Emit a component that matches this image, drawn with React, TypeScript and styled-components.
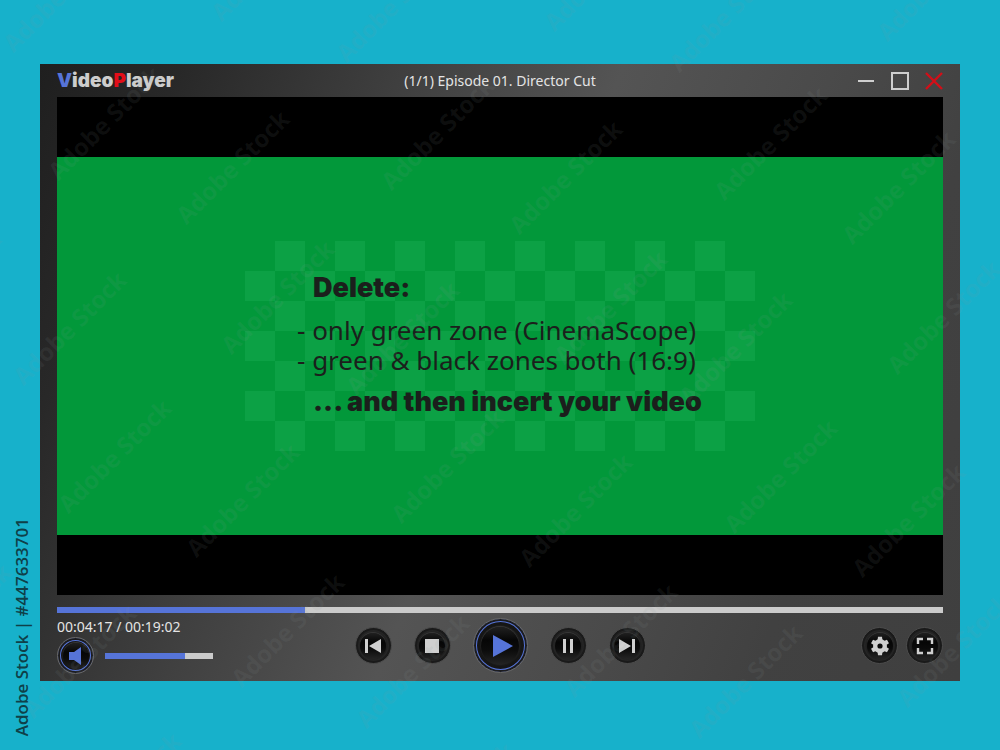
import React, { useState } from 'react';
import styled, { createGlobalStyle, css } from 'styled-components';

const blue = '#5674d8';
const light = '#cfcfcf';
const body = `'Noto Sans', 'Open Sans', sans-serif`;
const display = `Inter, 'Liberation Sans', sans-serif`;
const stamp = `'Open Sans', 'Noto Sans', sans-serif`;

const GlobalStyle = createGlobalStyle`
  *, *::before, *::after { box-sizing: border-box; }
  body { margin: 0; background: #17b1cb; font-family: ${body}; }
`;

const Page = styled.div`
  position: relative;
  min-height: 100vh;
  padding: 64px 4% 68px;
  overflow: hidden;
`;

const PlayerWindow = styled.main`
  padding: 0 17px;
  background: linear-gradient(112deg, #1f1f1f 0%, #282828 12%, #404040 32%, #545454 50%, #4a4a4a 68%, #414141 82%, #3f3f3f 100%);
`;

const TitleBar = styled.header`
  display: grid;
  grid-template-columns: 1fr auto 1fr;
  align-items: center;
  height: 33px;
`;

const Logo = styled.h1`
  margin: 0;
  font: 900 19px/24px ${display};
  color: #cdcdcd;
`;

const LogoLetter = styled.span<{ $color: string }>`
  color: ${(p) => p.$color};
`;

const EpisodeTitle = styled.p`
  margin: 0;
  font-size: 14px;
  line-height: 20px;
  color: #e4e4e4;
`;

const WindowButtons = styled.div`
  display: flex;
  justify-content: flex-end;
  gap: 16px;
`;

const WindowButton = styled.button`
  display: flex;
  width: 18px;
  height: 18px;
  padding: 0;
  border: 0;
  background: none;
  cursor: pointer;
`;

const Screen = styled.section`
  display: flex;
  aspect-ratio: 16 / 9;
  padding: 60px 0;
  background: #000;
`;

const Scope = styled.div`
  flex: 1;
  display: flex;
  align-items: center;
  justify-content: center;
  background: #02983a;
`;

const Checker = styled.div`
  display: flex;
  align-items: center;
  justify-content: center;
  width: 510px;
  height: 210px;
  padding-bottom: 3px;
  background: repeating-conic-gradient(#0ca145 0 25%, transparent 0 50%) 0 0 / 60px 60px;
`;

const Note = styled.div`
  display: flex;
  flex-direction: column;
  gap: 12px;
  width: 406px;
  color: #1b1f1c;
  white-space: nowrap;
`;

const NoteHeading = styled.p`
  margin: 0;
  padding-left: 16px;
  font: 900 27px/30px ${display};
`;

const NoteLines = styled.p`
  margin: 0;
  font-size: 26px;
  line-height: 30px;
`;

const rangeTrack = css<{ $value: number }>`
  appearance: none;
  display: block;
  height: 6px;
  margin: 0;
  cursor: pointer;
  background: linear-gradient(to right, ${blue} ${(p) => p.$value}%, #cbcbcb ${(p) => p.$value}%);
  &::-webkit-slider-thumb { appearance: none; width: 1px; height: 6px; background: transparent; }
`;

const Progress = styled.input<{ $value: number }>`
  ${rangeTrack}
  width: 100%;
  margin-top: 12px;
`;

const Volume = styled.input<{ $value: number }>`
  ${rangeTrack}
  width: 108px;
`;

const Controls = styled.footer`
  display: grid;
  grid-template-columns: 1fr auto 1fr;
  align-items: center;
  padding: 4px 0 7px;
`;

const Time = styled.p`
  margin: 0;
  font-size: 14px;
  line-height: 20px;
  color: #e4e4e4;
`;

const VolumeRow = styled.div`
  display: flex;
  align-items: center;
  gap: 11px;
`;

const Transport = styled.div`
  display: flex;
  align-items: center;
  gap: 22px;
`;

const Options = styled.div`
  display: flex;
  justify-content: flex-end;
  gap: 8px;
`;

const RoundButton = styled.button<{ $size?: number; $ring?: boolean }>`
  display: flex;
  align-items: center;
  justify-content: center;
  width: ${(p) => p.$size ?? 37}px;
  height: ${(p) => p.$size ?? 37}px;
  padding: 0;
  border: 1px solid ${(p) => (p.$ring ? '#6a6a6a' : '#4c4c4c')};
  border-radius: 50%;
  background: #1b1b1b;
  box-shadow: ${(p) =>
    p.$ring
      ? `inset 0 0 0 2px #1c1c1e, inset 0 0 0 3px ${blue}, inset 0 0 0 6px #161616`
      : 'inset 0 0 0 2px #1a1a1a, inset 0 0 2px 4px #262626'};
  cursor: pointer;
`;

const Face = styled.span<{ $size: number }>`
  display: flex;
  align-items: center;
  justify-content: center;
  width: ${(p) => p.$size}px;
  height: ${(p) => p.$size}px;
  border-radius: 50%;
  background: linear-gradient(#202020 0%, #060606 35%, #0b0b0b 60%, #242424 100%);
  box-shadow: 0 -1px 1px #3a3a3a;
`;

const MarkLayer = styled.div`
  position: absolute;
  inset: 0;
  overflow: hidden;
  pointer-events: none;
`;

const Mark = styled.span<{ $x: number; $y: number }>`
  position: absolute;
  left: ${(p) => p.$x}px;
  top: ${(p) => p.$y - 28}px;
  font: 700 24px/28px ${stamp};
  color: rgba(140, 155, 155, 0.1);
  white-space: nowrap;
  transform: rotate(-45deg);
  transform-origin: 0 100%;
`;

const StockId = styled.p`
  position: absolute;
  left: 11px;
  bottom: 14px;
  margin: 0;
  font: 600 17px/22px ${stamp};
  color: #0f4048;
  white-space: nowrap;
  writing-mode: vertical-rl;
  transform: rotate(180deg);
`;

const cell = [[17, 57], [-108, 16], [62, 185], [190, 229]];
const marks = [0, 1, 2].flatMap((row) =>
  [0, 1, 2, 3].flatMap((col) =>
    cell.map(([x, y]) => [x + col * 333 + row * 10, y + col * 10 + row * 333]),
  ),
).filter(([x, y]) => x < 1000 && y < 890);

const Icon = ({ size, children }: { size: number; children: React.ReactNode }) => (
  <svg width={size} height={size} viewBox={`0 0 ${size} ${size}`} aria-hidden="true">
    {children}
  </svg>
);

type ControlProps = { label: string; size?: number; ring?: boolean; face?: number; children: React.ReactNode };

const Control = ({ label, size, ring, face = 26, children }: ControlProps) => (
  <RoundButton type="button" aria-label={label} $size={size} $ring={ring}>
    <Face $size={face}>{children}</Face>
  </RoundButton>
);

export default function App() {
  const [progress, setProgress] = useState(28);
  const [volume, setVolume] = useState(74);

  return (
    <Page>
      <GlobalStyle />
      <PlayerWindow>
        <TitleBar>
          <Logo>
            <LogoLetter $color={blue}>V</LogoLetter>ideo<LogoLetter $color="#e30d18">P</LogoLetter>layer
          </Logo>
          <EpisodeTitle>(1/1) Episode 01. Director Cut</EpisodeTitle>
          <WindowButtons>
            <WindowButton type="button" aria-label="Minimize">
              <Icon size={18}><path d="M1 9h16" stroke={light} strokeWidth="2" /></Icon>
            </WindowButton>
            <WindowButton type="button" aria-label="Maximize">
              <Icon size={18}><path d="M1 1h16v16H1z" fill="none" stroke={light} strokeWidth="2" /></Icon>
            </WindowButton>
            <WindowButton type="button" aria-label="Close">
              <Icon size={18}><path d="M1 1l16 16M17 1L1 17" stroke="#d20f18" strokeWidth="2.4" /></Icon>
            </WindowButton>
          </WindowButtons>
        </TitleBar>

        <Screen>
          <Scope>
            <Checker>
              <Note>
                <NoteHeading>Delete:</NoteHeading>
                <NoteLines>
                  - only green zone (CinemaScope)
                  <br />- green &amp; black zones both (16:9)
                </NoteLines>
                <NoteHeading>... and then incert your video</NoteHeading>
              </Note>
            </Checker>
          </Scope>
        </Screen>

        <Progress
          type="range"
          aria-label="Progress"
          value={progress}
          $value={progress}
          onChange={(e) => setProgress(Number(e.target.value))}
        />

        <Controls>
          <div>
            <Time>00:04:17 / 00:19:02</Time>
            <VolumeRow>
              <Control label="Mute" ring>
                <Icon size={18}><path d="M2 5h5l7-5v18l-7-5H2z" fill={blue} /></Icon>
              </Control>
              <Volume
                type="range"
                aria-label="Volume"
                value={volume}
                $value={volume}
                onChange={(e) => setVolume(Number(e.target.value))}
              />
            </VolumeRow>
          </div>
          <Transport>
            <Control label="Previous">
              <Icon size={16}><path d="M0 1h3v14H0zM16 1v14L4 8z" fill={light} /></Icon>
            </Control>
            <Control label="Stop">
              <Icon size={14}><path d="M0 0h14v14H0z" fill={light} /></Icon>
            </Control>
            <Control label="Play" size={55} face={38} ring>
              <Icon size={26}><path d="M6 2v22l20-11z" fill={blue} /></Icon>
            </Control>
            <Control label="Pause">
              <Icon size={14}><path d="M2 0h3v14H2zM9 0h3v14H9z" fill={light} /></Icon>
            </Control>
            <Control label="Next">
              <Icon size={16}><path d="M13 1h3v14h-3zM0 1v14l12-7z" fill={light} /></Icon>
            </Control>
          </Transport>
          <Options>
            <Control label="Settings">
              <Icon size={20}>
                <circle cx="10" cy="10" r="4.8" fill="none" stroke={light} strokeWidth="4.4" />
                {[0, 60, 120].map((angle) => (
                  <path
                    key={angle}
                    d="M7.6 4L8 .8h4L12.4 4zM7.6 16l.4 3.2h4l.4-3.2z"
                    fill={light}
                    transform={`rotate(${angle} 10 10)`}
                  />
                ))}
              </Icon>
            </Control>
            <Control label="Full screen">
              <Icon size={18}>
                <path
                  d="M2 7V2h5M11 2h5v5M16 11v5h-5M7 16H2v-5"
                  fill="none"
                  stroke={light}
                  strokeWidth="2.4"
                />
              </Icon>
            </Control>
          </Options>
        </Controls>
      </PlayerWindow>

      <MarkLayer aria-hidden="true">
        {marks.map(([x, y]) => (
          <Mark key={`${x}:${y}`} $x={x} $y={y}>Adobe Stock</Mark>
        ))}
      </MarkLayer>
      <StockId>Adobe Stock | #447633701</StockId>
    </Page>
  );
}
